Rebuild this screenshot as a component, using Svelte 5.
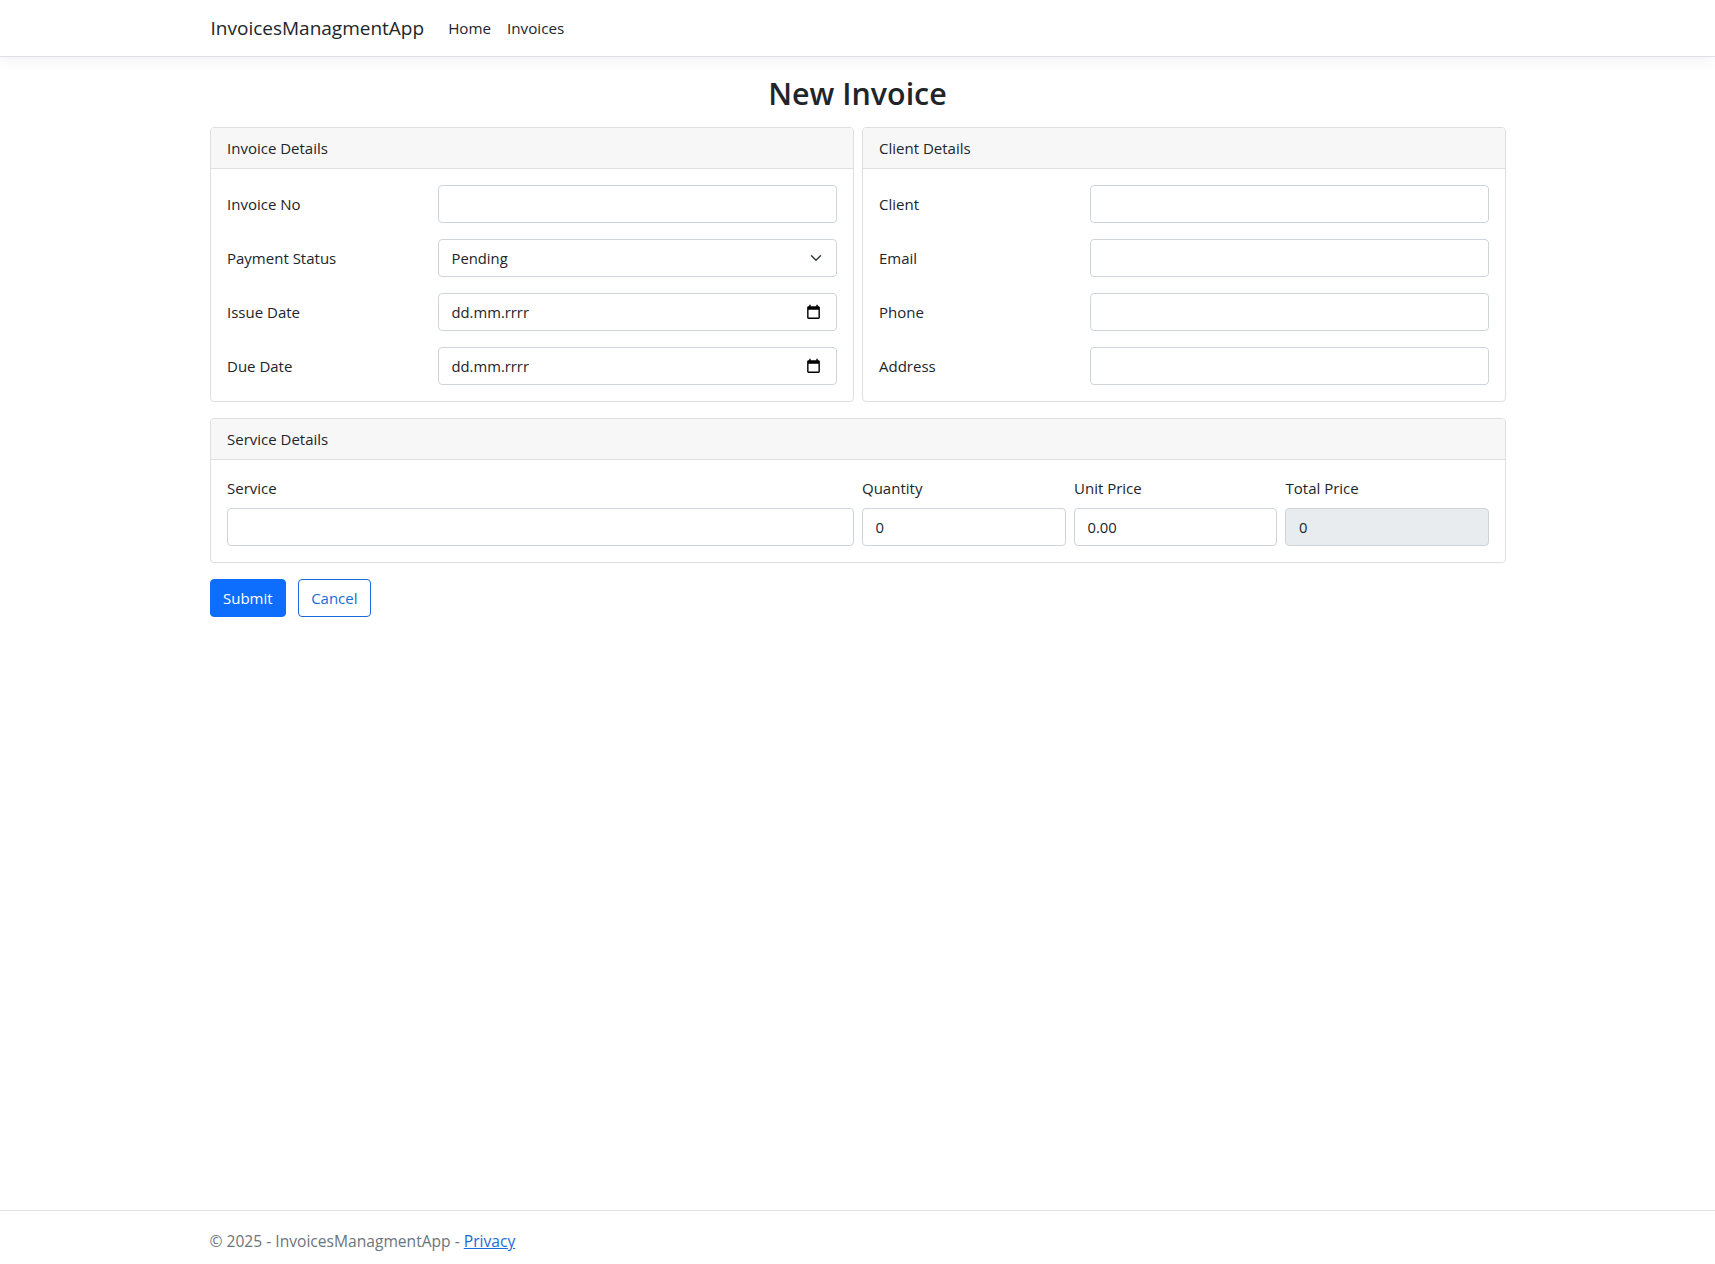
<script>
  const left = [
    { label: 'Invoice No', kind: 'text' },
    { label: 'Payment Status', kind: 'select' },
    { label: 'Issue Date', kind: 'date' },
    { label: 'Due Date', kind: 'date' }
  ];
  const right = ['Client', 'Email', 'Phone', 'Address'];
</script>

<div class="page">
  <header class="navbar">
    <div class="container nav-inner">
      <a class="brand" href="#top">InvoicesManagmentApp</a>
      <nav class="links">
        <a href="#home">Home</a>
        <a href="#invoices">Invoices</a>
      </nav>
    </div>
  </header>

  <main class="container main">
    <h1>New Invoice</h1>
    <form class="form" onsubmit={(e) => e.preventDefault()}>
      <div class="two">
        <section class="card">
          <div class="card-header">Invoice Details</div>
          <div class="card-body rows">
            {#each left as f}
              <div class="row">
                <label for={f.label}>{f.label}</label>
                {#if f.kind === 'select'}
                  <div class="field">
                    <select id={f.label} class="control select"><option>Pending</option><option>Paid</option></select>
                    <svg class="chev" viewBox="0 0 16 16" aria-hidden="true"><path fill="none" stroke="#343a40" stroke-linecap="round" stroke-linejoin="round" stroke-width="2" d="m2 5 6 6 6-6"/></svg>
                  </div>
                {:else if f.kind === 'date'}
                  <div class="field">
                    <input id={f.label} class="control" value="dd.mm.rrrr" />
                    <svg class="cal" viewBox="0 0 24 24" aria-hidden="true"><path d="M19 3h-1V1h-2v2H8V1H6v2H5c-1.11 0-1.99.9-1.99 2L3 19c0 1.1.89 2 2 2h14c1.1 0 2-.9 2-2V5c0-1.1-.9-2-2-2zm0 16H5V8h14v11z"/></svg>
                  </div>
                {:else}
                  <input id={f.label} class="control" />
                {/if}
              </div>
            {/each}
          </div>
        </section>
        <section class="card">
          <div class="card-header">Client Details</div>
          <div class="card-body rows">
            {#each right as f}
              <div class="row">
                <label for={f}>{f}</label>
                <input id={f} class="control" />
              </div>
            {/each}
          </div>
        </section>
      </div>

      <section class="card">
        <div class="card-header">Service Details</div>
        <div class="card-body service">
          <div class="col"><label for="service">Service</label><input id="service" class="control" /></div>
          <div class="col"><label for="qty">Quantity</label><input id="qty" class="control" value="0" /></div>
          <div class="col"><label for="unit">Unit Price</label><input id="unit" class="control" value="0.00" /></div>
          <div class="col"><label for="total">Total Price</label><input id="total" class="control ro" value="0" readonly /></div>
        </div>
      </section>

      <div class="actions">
        <button class="btn primary" type="submit">Submit</button>
        <button class="btn outline" type="button">Cancel</button>
      </div>
    </form>
  </main>

  <footer class="footer">
    <div class="container">© 2025 - InvoicesManagmentApp - <a href="#privacy">Privacy</a></div>
  </footer>
</div>

<style>
  :global(body) {
    margin: 0;
    background: #fff;
    color: #212529;
    font-family: "Open Sans", "Noto Sans", sans-serif;
    font-size: 15px;
    line-height: 24px;
  }
  .page {
    display: flex;
    flex-direction: column;
    min-height: 1264px;
  }
  .container {
    box-sizing: border-box;
    width: 1320px;
    margin: 0 auto;
    padding: 0 12px;
  }
  .navbar {
    height: 56px;
    box-sizing: content-box;
    border-bottom: 1px solid #dee2e6;
    box-shadow: 0 4px 12px rgba(0, 0, 0, 0.05);
  }
  .nav-inner {
    display: flex;
    align-items: center;
    height: 100%;
  }
  .brand {
    font-size: 19px;
    color: #212529;
    text-decoration: none;
    margin-right: 16px;
    padding-left: 1px;
  }
  .links { display: flex; }
  .links a {
    color: #212529;
    text-decoration: none;
    padding: 0 8px;
    font-size: 15.2px;
  }
  .main { flex: 1; }
  h1 {
    margin: 18px 0 14px;
    font-size: 30.4px;
    line-height: 38px;
    font-weight: 600;
    text-align: center;
  }
  .form {
    display: flex;
    flex-direction: column;
    gap: 16px;
  }
  .two {
    display: grid;
    grid-template-columns: 1fr 1fr;
    gap: 8px;
  }
  .card {
    border: 1px solid #dfdfdf;
    border-radius: 4px;
    overflow: hidden;
  }
  .card-header {
    height: 40px;
    padding: 0 16.5px;
    display: flex;
    align-items: center;
    background: #f7f7f7;
    border-bottom: 1px solid #dfdfdf;
  }
  .card-body { padding: 16px; }
  .rows {
    display: flex;
    flex-direction: column;
    gap: 16px;
  }
  .row {
    display: grid;
    grid-template-columns: 211px 1fr;
    align-items: center;
  }
  label { padding-left: 0.5px; }
  .field { position: relative; }
  .control {
    display: block;
    box-sizing: border-box;
    width: 100%;
    height: 38px;
    padding: 0 13px;
    border: 1px solid #ced4da;
    border-radius: 4px;
    background: #fff;
    color: #212529;
    font: inherit;
    font-size: 14.8px;
    outline: none;
  }
  .select { appearance: none; }
  .ro { background: #e9ecef; }
  .chev {
    position: absolute;
    right: 15px;
    top: 13px;
    width: 12px;
    height: 12px;
    pointer-events: none;
  }
  .cal {
    position: absolute;
    right: 15px;
    top: 10.5px;
    width: 17px;
    height: 17px;
    pointer-events: none;
  }
  .service {
    display: grid;
    grid-template-columns: calc(50% - 4px) 204px 203.5px 1fr;
    gap: 8px;
  }
  .col label {
    display: block;
    margin-bottom: 8px;
  }
  .actions {
    display: flex;
    gap: 12px;
  }
  .btn {
    height: 38px;
    padding: 0 12px;
    border-radius: 4px;
    font: inherit;
    cursor: pointer;
  }
  .primary {
    background: #0d6efd;
    border: 1px solid #0d6efd;
    color: #fff;
    padding: 0 12.5px;
  }
  .outline {
    background: #fff;
    border: 1px solid #1a6bd8;
    color: #1a6bd8;
  }
  .footer {
    height: 53px;
    border-top: 1px solid #dee2e6;
    color: #6c757d;
    font-size: 15.6px;
    line-height: 60px;
  }
  .footer a { color: #1a6bd8; }
</style>
